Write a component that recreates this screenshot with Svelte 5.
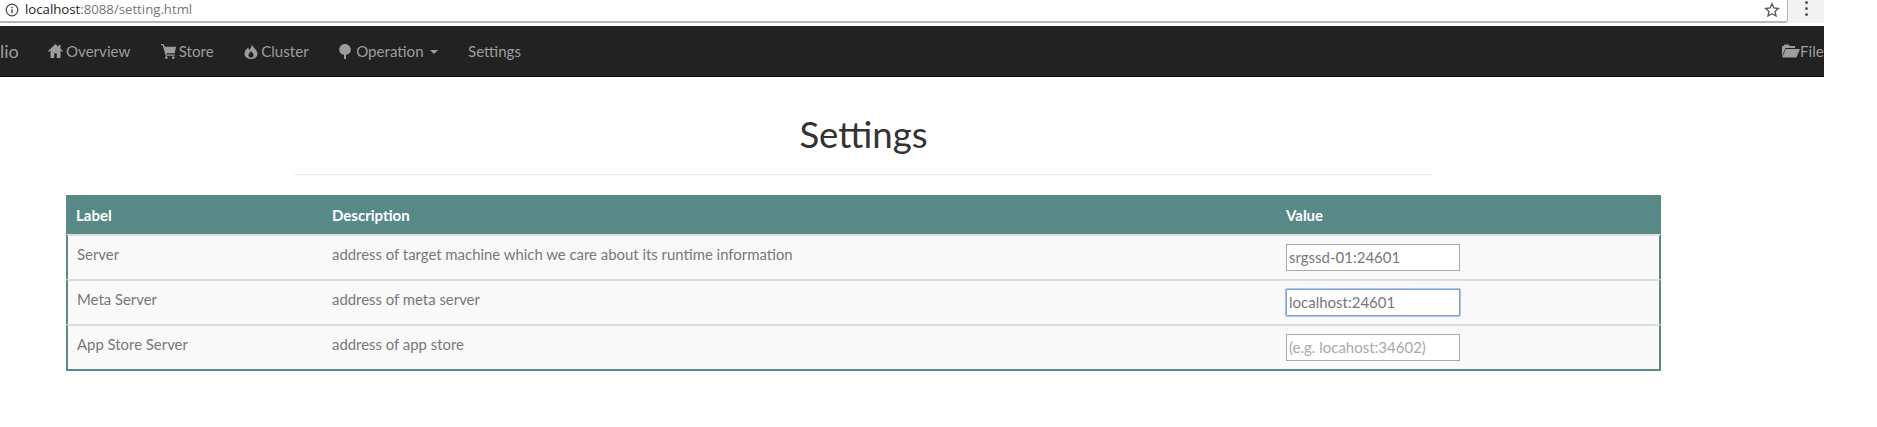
<script>
  const rows = [
    { label: 'Server', description: 'address of target machine which we care about its runtime information', value: 'srgssd-01:24601', placeholder: '', focused: false },
    { label: 'Meta Server', description: 'address of meta server', value: 'localhost:24601', placeholder: '', focused: true },
    { label: 'App Store Server', description: 'address of app store', value: '', placeholder: '(e.g. locahost:34602)', focused: false }
  ];
</script>

<div class="page">
  <div class="chrome">
    <div class="address">
      <svg class="info" viewBox="0 0 14 14" width="14" height="14">
        <circle cx="7" cy="7" r="5.8" fill="none" stroke="#444" stroke-width="1.2" />
        <rect x="6.3" y="6.2" width="1.4" height="4" fill="#444" />
        <rect x="6.3" y="3.8" width="1.4" height="1.4" fill="#444" />
      </svg>
      <span class="url"><b>localhost</b>:8088/setting.html</span>
      <svg class="star" viewBox="0 0 16 16" width="16" height="16">
        <path d="M8 1.8l1.9 4.2 4.5.5-3.4 3 1 4.5L8 11.7 4 14l1-4.5-3.4-3 4.5-.5z" fill="none" stroke="#555" stroke-width="1.3" />
      </svg>
    </div>
    <div class="menu"><i></i><i></i><i></i></div>
  </div>

  <nav>
    <span class="brand">lio</span>
    <a href="#overview">
      <svg viewBox="0 0 15 14" width="15" height="14"><path d="M7.5 0L0 7l.9 1L2.500 6.600V14h3.700V9.200h2.600V14h3.700V6.600L14.100 8l.9-1-2.500-2.300V1h-2v1.900z" /></svg>
      Overview
    </a>
    <a href="#store">
      <svg viewBox="0 0 15 15" width="15" height="15"><path d="M0 0h2.600l1 2.800H15l-1.300 6.400H5.500l.4 1.300h7.800v1.300H4.700L1.700 1.300H0zM5.300 12.300a1.300 1.300 0 1 0 .01 0zM12.300 12.300a1.300 1.300 0 1 0 .01 0z" /></svg>
      Store
    </a>
    <a href="#cluster">
      <svg viewBox="0 0 14 15" width="14" height="15"><path fill-rule="evenodd" d="M7.600 0c.7 2.800-1.700 4-2 6.200C4.800 5.600 4.400 4.600 4.500 3.400 2.100 5 .5 7.200.5 9.500c0 3.100 2.600 5.500 6.500 5.500s6.500-2.400 6.500-5.300C13.500 5.700 8.900 4 7.600 0zM7 13.600c-1.500 0-2.600-1-2.600-2.400 0-1.700 1.800-2.500 2.400-4.300 1.400 1.200 2.800 2.600 2.800 4.300 0 1.400-1.100 2.400-2.600 2.400z" /></svg>
      Cluster
    </a>
    <a href="#operation">
      <svg class="tree" viewBox="0 0 12 15" width="12" height="15"><path d="M6 0C2.800 0 .2 2.600 .2 5.800c0 2.800 2.200 4.800 4.800 5V15h2v-4.200c2.600-.2 4.800-2.200 4.800-5C11.800 2.600 9.200 0 6 0z" /></svg>
      Operation
      <span class="caret"></span>
    </a>
    <a href="#settings">Settings</a>
    <a href="#files" class="files">
      <svg viewBox="0 0 19 14" width="19" height="14"><path d="M1 12.500V2h1.500l1-1.500h4L9 2h5v2H4.500zM4.800 5H19l-3.500 8.500H1.200z" /></svg>
      File
    </a>
  </nav>

  <main>
    <h1>Settings</h1>
    <hr />
    <table>
      <thead>
        <tr>
          <th class="col-label">Label</th>
          <th class="col-desc">Description</th>
          <th>Value</th>
        </tr>
      </thead>
      <tbody>
        {#each rows as row (row.label)}
          <tr>
            <td>{row.label}</td>
            <td>{row.description}</td>
            <td>
              <input class:focused={row.focused} value={row.value} placeholder={row.placeholder} />
            </td>
          </tr>
        {/each}
      </tbody>
    </table>
  </main>
</div>

<style>
  :global(body) {
    background: #fff;
    overflow: hidden;
  }

  .page {
    width: 1824px;
    font-family: Lato, 'Open Sans', sans-serif;
    color: #777;
  }

  .chrome {
    height: 26px;
    display: flex;
    align-items: flex-start;
    background: #fff;
  }

  .address {
    flex: 1;
    height: 21px;
    display: flex;
    align-items: center;
    gap: 6px;
    padding: 0 7px 0 5px;
    background: #fff;
    border: solid #b5b5b5;
    border-width: 0 1px 2px 0;
    border-bottom-right-radius: 3px;
  }

  .info {
    margin-top: -2px;
  }

  .url {
    flex: 1;
    font: 13.2px 'Open Sans', sans-serif;
    color: #757575;
    margin-top: -3px;
  }

  .url b {
    font-weight: 400;
    color: #222;
  }

  .star {
    margin-top: -2px;
  }

  .menu {
    width: 36px;
    height: 23px;
    background: #f2f2f2;
    display: flex;
    flex-direction: column;
    align-items: center;
    gap: 3px;
    padding-top: 1px;
    box-sizing: border-box;
  }

  .menu i {
    width: 3px;
    height: 3px;
    border-radius: 50%;
    background: #555;
  }

  nav {
    height: 51px;
    display: flex;
    align-items: center;
    background: #222;
    border-bottom: 1px solid #080808;
    box-sizing: border-box;
    font-size: 15.1px;
    overflow: hidden;
  }

  .brand {
    font-size: 18px;
    color: #9d9d9d;
    width: 48px;
    flex: none;
  }

  nav a {
    display: flex;
    align-items: center;
    gap: 3px;
    color: #9d9d9d;
    text-decoration: none;
    margin-right: 30.5px;
    white-space: nowrap;
  }

  nav svg {
    fill: #9d9d9d;
    flex: none;
  }

  .tree {
    margin-right: 2px;
  }

  .caret {
    width: 0;
    height: 0;
    border: solid transparent;
    border-width: 4px 4px 0;
    border-top-color: #9d9d9d;
    margin-left: 3px;
    margin-top: 2px;
  }

  .files {
    margin-left: auto;
    margin-right: 0;
    width: 43px;
    flex: none;
    gap: 0;
  }

  main {
    padding: 0 163px 0 66px;
  }

  h1 {
    margin: 0;
    padding-top: 37px;
    text-align: center;
    font-size: 36.6px;
    font-weight: 400;
    line-height: 40px;
    color: #333;
  }

  hr {
    width: 1139px;
    margin: 20px 0 20px 228px;
    border: 0;
    border-top: 1px solid #eee;
  }

  table {
    width: 100%;
    border-collapse: separate;
    border-spacing: 0;
    font-size: 14.9px;
    border-bottom: 2px solid #578a87;
  }

  th {
    height: 39px;
    padding: 0 10px;
    background: #578a87;
    color: #fff;
    text-align: left;
    font-size: 15px;
    font-weight: 700;
    box-sizing: border-box;
  }

  .col-label {
    width: 256px;
    box-sizing: border-box;
  }

  .col-desc {
    width: 954px;
    box-sizing: border-box;
  }

  td {
    height: 45px;
    padding: 8px 10px 0;
    vertical-align: top;
    box-sizing: border-box;
    background: #f9f9f9;
    border-top: 2px solid #ddd;
    line-height: 20px;
  }

  td:first-child {
    border-left: 2px solid #578a87;
    padding-left: 9px;
  }

  td:last-child {
    border-right: 2px solid #578a87;
  }

  input {
    display: block;
    width: 174px;
    height: 27px;
    box-sizing: border-box;
    padding: 0 2px 1px;
    font: 15px Lato, sans-serif;
    color: #777;
    background: #fff;
    border: 1px solid #a9a9a9;
    border-radius: 0;
    outline: none;
  }

  input::placeholder {
    color: #a9a9a9;
    opacity: 1;
  }

  input.focused {
    border-color: #7c9fd4;
    box-shadow: 0 0 1px 1px #a9c1e6;
    border-radius: 1px;
  }
</style>
